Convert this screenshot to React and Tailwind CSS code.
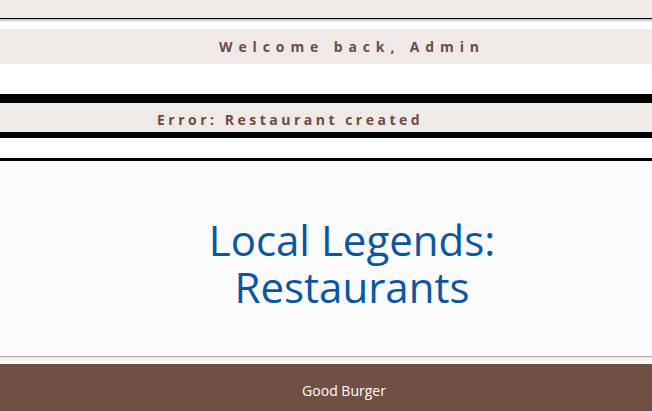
export default function App() {
  return (
    <div className="min-h-[411px] bg-white font-['Open_Sans',sans-serif] overflow-hidden">
      {/* top bar */}
      <div className="h-[19px] bg-[#efeae7] border-b border-black shadow-[0_2px_2px_rgba(0,0,0,0.25)]" />

      {/* welcome */}
      <div className="mt-[10px] h-[35px] bg-[#efeae7] flex items-center justify-center pl-[52px]">
        <p className="text-[14px] font-bold tracking-[0.42em] text-[#6f4b3f]">Welcome back, Admin</p>
      </div>

      {/* message */}
      <div className="mt-[30px] border-t-[9px] border-b-[6px] border-black bg-[#efeae7] h-[44px] flex items-center pl-[157px]">
        <p className="text-[14px] font-bold tracking-[0.25em] text-[#6f4b3f] pt-[3px]">Error: Restaurant created</p>
      </div>

      {/* hero */}
      <div className="mt-[20px] border-t-[3px] border-black bg-[#fafafa] h-[199px] border-b border-b-[#a9a9a9] shadow-[0_2px_5px_rgba(0,0,0,0.12)] flex items-center justify-center pl-[52px]">
        <h1 className="text-center text-[42px] leading-[47px] text-[#0b56a1] pt-[8px]">
          <span className="block">Local Legends:</span>
          <span className="block">Restaurants</span>
        </h1>
      </div>

      {/* restaurant list */}
      <div className="mt-[7px] bg-[#724f44] h-[60px] flex justify-center pl-[36px] pt-[16px]">
        <p className="text-[14px] text-white">Good Burger</p>
      </div>
    </div>
  );
}
